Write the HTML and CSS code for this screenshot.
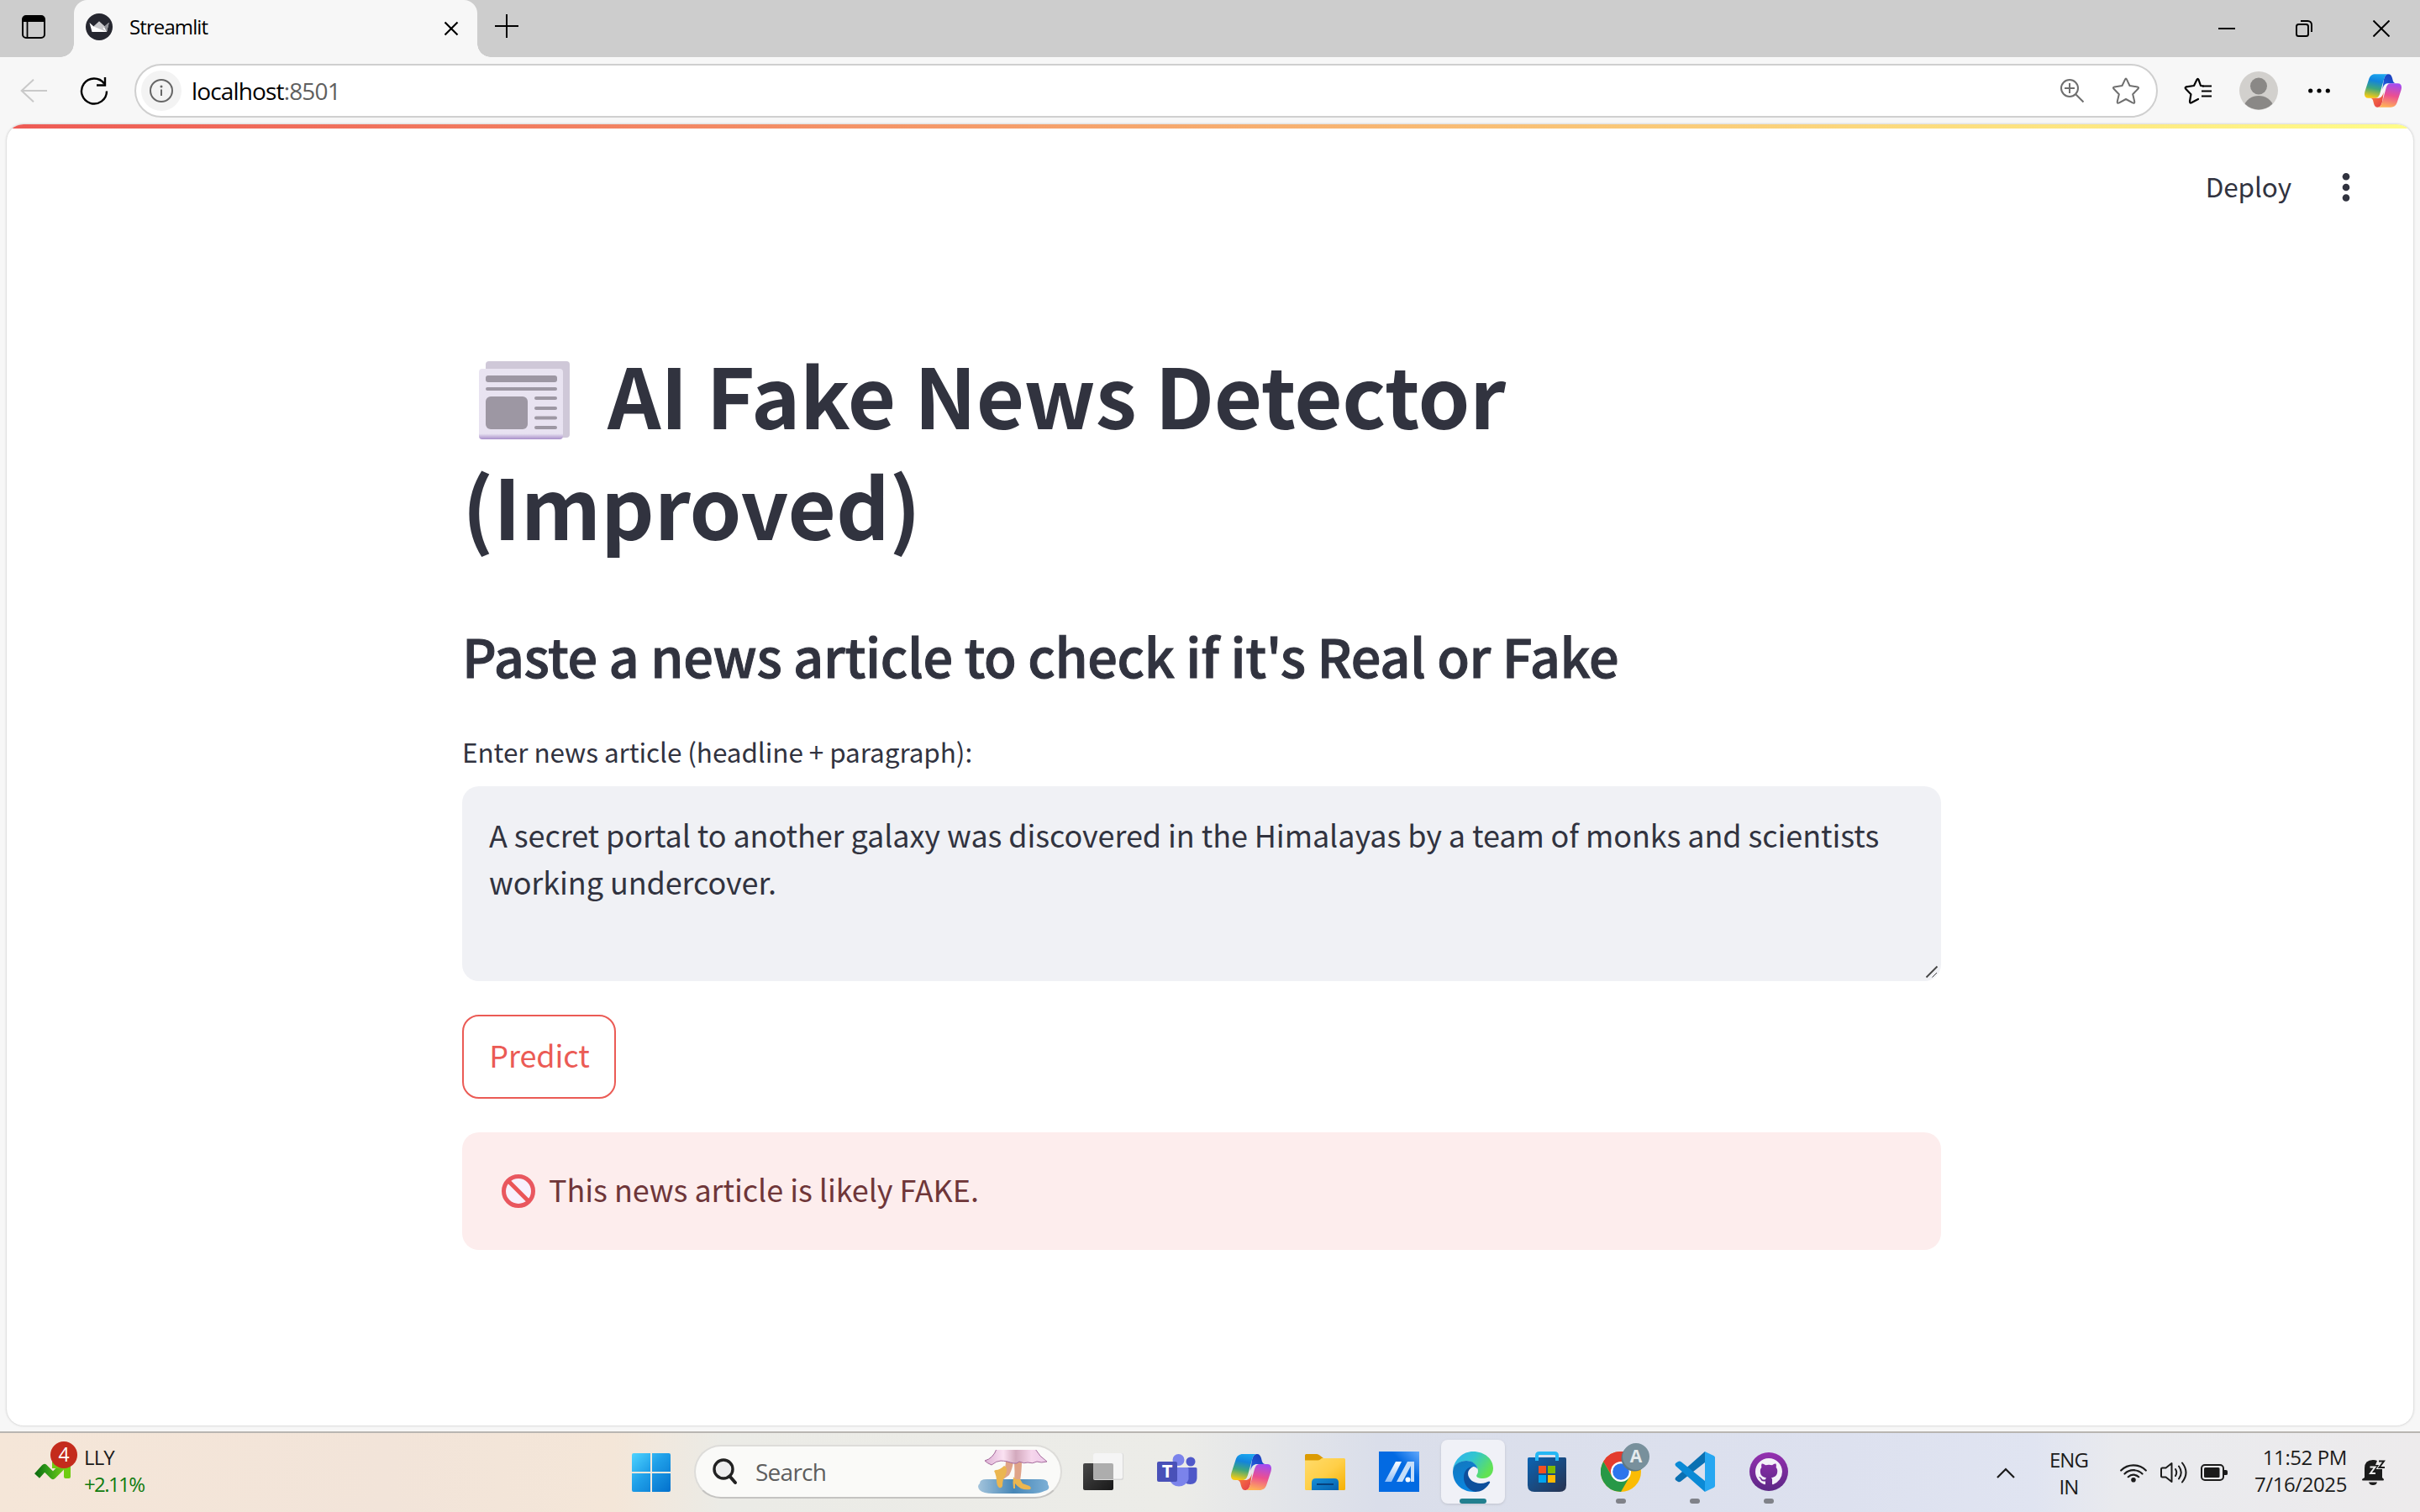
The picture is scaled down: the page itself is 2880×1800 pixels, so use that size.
FILE: index.html
```html
<!DOCTYPE html>
<html lang="en">
<head>
<meta charset="utf-8">
<title>Streamlit</title>
<link rel="stylesheet" href="styles.css">
</head>
<body>
<svg class="defs" width="0" height="0" aria-hidden="true">
  <defs>
    <linearGradient id="cpA" x1="0.6" y1="0" x2="0.4" y2="1"><stop offset="0" stop-color="#1aa5ee"/><stop offset=".3" stop-color="#1384dc"/><stop offset=".62" stop-color="#3fa77c"/><stop offset="1" stop-color="#f6cb14"/></linearGradient>
    <linearGradient id="cpB" x1="1" y1="0" x2="0.2" y2="1"><stop offset="0" stop-color="#1b39b4"/><stop offset="1" stop-color="#1f5fe0"/></linearGradient>
    <linearGradient id="cpC" x1="0.6" y1="0" x2="0.4" y2="1"><stop offset="0" stop-color="#a44cf0"/><stop offset=".5" stop-color="#ec4f90"/><stop offset="1" stop-color="#ffb257"/></linearGradient>
    <linearGradient id="cpD" x1="0" y1="0" x2="1" y2="1"><stop offset="0" stop-color="#ff8a3c"/><stop offset="1" stop-color="#e2384a"/></linearGradient>
    <symbol id="copilot" viewBox="0 0 48 43">
      <path fill="url(#cpB)" d="M31 0C34 0 35 2 36 5L37 9C38 11.500 39.500 12 42 12H31C27 12 25 14 23 20L25 7C26.500 2 28 0 31 0Z"/>
      <path fill="url(#cpA)" d="M14 0H31C28 0 26.500 2 25 7L20 25C18.500 29.500 17 31 13 31H5C0 31-.8 27 .6 22L5.500 7C7 2 10 0 14 0Z"/>
      <path fill="url(#cpD)" d="M17 43C14 43 13 41 12 38L11 34C10 31.500 8.500 31 6 31H17C21 31 23 29 25 23L23 36C21.500 41 20 43 17 43Z"/>
      <path fill="url(#cpC)" d="M34 43H17C20 43 21.500 41 23 36L28 18C29.500 13.500 31 12 35 12H43C48 12 48.800 16 47.400 21L42.500 36C41 41 38 43 34 43Z"/>
    </symbol>
  </defs>
</svg>

<header class="browser">
  <div class="tabstrip">
    <svg class="i-workspace" width="28" height="28" viewBox="0 0 28 28"><rect x="1" y="1" width="26" height="26" rx="4" fill="none" stroke="#000" stroke-width="2"/><path d="M1 8V5a4 4 0 0 1 4-4h18a4 4 0 0 1 4 4v3z"/><path d="M6.500 7v20" stroke="#000" stroke-width="1.800"/></svg>
    <div class="tab">
      <svg width="32" height="32" viewBox="0 0 32 32"><circle cx="16" cy="16" r="16" fill="#262730"/><path fill="#fff" d="M4.500 11l5 4.500L16 9.500l6.500 6L27.500 11 25 22H7.500z"/><path fill="#c9c9cc" d="M9.500 15.500L16 9.500l6.500 6-2 2.500 4.500 4z"/><path fill="#8f9096" d="M22 16l6-5.200L25 22z"/></svg>
      <span class="tab-title">Streamlit</span>
      <svg class="tab-close" width="18" height="18" viewBox="0 0 18 18"><path d="M1.500 1.500l15 15m0-15l-15 15" stroke="#000" stroke-width="2.200"/></svg>
    </div>
    <svg class="newtab" width="28" height="28" viewBox="0 0 28 28"><path d="M14 0v28M0 14h28" stroke="#000" stroke-width="2"/></svg>
    <div class="winctl">
      <svg width="20" height="20" viewBox="0 0 20 20"><path d="M0 10h20" stroke="#000" stroke-width="2"/></svg>
      <svg width="20" height="20" viewBox="0 0 20 20" fill="none" stroke="#000" stroke-width="2"><rect x="1" y="5" width="14" height="14" rx="2.500"/><path d="M6 1h8.500A4.500 4.500 0 0 1 19 5.500V14"/></svg>
      <svg width="20" height="20" viewBox="0 0 20 20"><path d="M.5.500l19 19m0-19l-19 19" stroke="#000" stroke-width="2"/></svg>
    </div>
  </div>
  <div class="toolbar">
    <svg width="32" height="28" viewBox="0 0 32 28" fill="none" stroke="#c9c9c9" stroke-width="2"><path d="M32 14H2M16 .7L1.700 14 16 27.300"/></svg>
    <svg class="i-reload" width="34" height="34" viewBox="0 0 34 34" fill="none" stroke="#000" stroke-width="2.400"><path d="M32 17.500A15 15 0 1 1 29 8.500M30 1v9.500h-10"/></svg>
    <div class="address">
      <span class="info"><svg width="28" height="28" viewBox="0 0 28 28"><circle cx="14" cy="14" r="13" fill="none" stroke="#666" stroke-width="2"/><path d="M14 12.500V20" stroke="#666" stroke-width="2"/><circle cx="14" cy="9" r="1.500" fill="#666"/></svg></span>
      <span class="url">localhost<span class="port">:8501</span></span>
      <svg class="i-zoom" width="30" height="30" viewBox="0 0 30 30" fill="none" stroke="#6f6f6f" stroke-width="2"><circle cx="12" cy="12" r="10"/><path d="M19.500 19.500L28.500 28.500M12 6v12M6 12h12"/></svg>
      <svg width="34" height="32" viewBox="0 0 34 32" fill="none" stroke="#6f6f6f" stroke-width="2" stroke-linejoin="round"><path d="M16 2.600Q17 .6 18 2.600L21.500 10 30.500 11.400Q33 12 31.400 13.800L25.200 20.200 27.200 28.800Q27.600 31.600 25 30.400L17 26 9 30.400Q6.400 31.600 6.800 28.800L8.800 20.200 2.600 13.800Q1 12 3.500 11.400L12.500 10Z"/></svg>
    </div>
    <svg class="i-fav" width="34" height="32" viewBox="0 0 34 32" fill="none" stroke="#000" stroke-width="2.200" stroke-linejoin="round" stroke-linecap="round"><path d="M23 10.500L20 10 17.500 2.800Q16.500.8 15.500 2.800L12 10 3 11.400Q.8 12 2.200 13.800L8.400 20.200 7 28.800Q7 31.400 9 30.300L17 26"/><path stroke-linecap="butt" d="M22 10.500h11M21 16.500h12M21 22.500h12"/></svg>
    <svg class="i-avatar" width="46" height="46" viewBox="0 0 46 46"><clipPath id="av"><circle cx="23" cy="23" r="22.500"/></clipPath><circle cx="23" cy="23" r="23" fill="#d2d0cd"/><g clip-path="url(#av)" fill="#8a8886"><circle cx="23" cy="17.500" r="10"/><path d="M5 42C8 33 15 29 23 29s15 4 18 13v6H5z"/></g></svg>
    <svg class="i-dots" width="26" height="8" viewBox="0 0 26 8"><circle cx="2.700" cy="4" r="2.600"/><circle cx="13" cy="4" r="2.600"/><circle cx="23.300" cy="4" r="2.600"/></svg>
    <svg class="i-cp" width="44" height="40"><use href="#copilot"/></svg>
  </div>
</header>

<main class="page">
  <div class="decoration"></div>
  <div class="app-header">
    <span class="deploy">Deploy</span>
    <svg width="10" height="36" viewBox="0 0 10 36" fill="#31333f"><circle cx="5" cy="5.300" r="4.300"/><circle cx="5" cy="18" r="4.300"/><circle cx="5" cy="30.500" r="4.300"/></svg>
  </div>
  <div class="content">
    <h1><svg class="news" width="108" height="93" viewBox="0 0 108 93">
      <defs><linearGradient id="np" x1="0" y1="0" x2="0" y2="1"><stop offset="0" stop-color="#e9e4f1"/><stop offset=".92" stop-color="#e8e2f1"/><stop offset="1" stop-color="#a88fc9"/></linearGradient></defs>
      <rect x="8" y="0" width="100" height="91" rx="4" fill="#cfc8d8"/><rect x="0" y="9" width="100" height="84" rx="4" fill="url(#np)"/>
      <g fill="#9d97a3"><rect x="8" y="17" width="85" height="8" rx="3"/><rect x="8" y="31" width="85" height="4" rx="2"/><rect x="8" y="42" width="50" height="39" rx="6"/><rect x="66" y="42" width="27" height="4" rx="2"/><rect x="66" y="54" width="27" height="4" rx="2"/><rect x="66" y="65.500" width="27" height="4" rx="2"/><rect x="66" y="77" width="27" height="4" rx="2"/></g></svg><span class="first-line">AI Fake News Detector</span><br><span>(Improved)</span></h1>
    <h3>Paste a news article to check if it's Real or Fake</h3>
    <label class="label">Enter news article (headline + paragraph):</label>
    <div class="textarea">
      <p>A secret portal to another galaxy was discovered in the Himalayas by a team of monks and scientists<br>working undercover.</p>
      <svg class="grip" width="18" height="18" viewBox="0 0 18 18" fill="none" stroke="#444"><path d="M1.500 14.500l13-13" stroke-width="1.800"/><path d="M8.500 14.500l5.500-5.500" stroke-width="1"/></svg>
    </div>
    <button class="predict">Predict</button>
    <div class="alert">
      <svg width="40" height="40" viewBox="0 0 40 40"><circle cx="20" cy="20" r="17.500" fill="#f8f1fd" stroke="#e9575f" stroke-width="5"/><path d="M8 8l24 24" stroke="#ea5558" stroke-width="5"/></svg>
      <span>This news article is likely FAKE.</span>
    </div>
  </div>
</main>

<footer class="taskbar">
  <div class="widget">
    <svg width="54" height="50" viewBox="0 0 54 50"><defs><linearGradient id="gr" x1="0" x2="1"><stop offset="0" stop-color="#107010"/><stop offset=".35" stop-color="#2f9a18"/><stop offset="1" stop-color="#78d014"/></linearGradient></defs><path d="M4 41L13 31 23 41 38 26" fill="none" stroke="url(#gr)" stroke-width="8" stroke-linejoin="round"/><path d="M22 24h22v18q0 2-2 2h-4q-2 0-2-2V32H22z" fill="#70cc12"/><circle cx="36" cy="16" r="16" fill="#c42b1c"/><text x="36" y="24" text-anchor="middle" fill="#fff" class="badge-t">4</text></svg>
    <div class="ticker"><span>LLY</span><span class="up">+2.11%</span></div>
  </div>
  <svg class="start" width="46" height="46" viewBox="0 0 46 46"><defs><linearGradient id="w" x1="0" y1="0" x2="1" y2="1"><stop offset="0" stop-color="#4fd4ff"/><stop offset=".45" stop-color="#1f9fe8"/><stop offset="1" stop-color="#0270cc"/></linearGradient></defs><path fill="url(#w)" d="M2 0H22V22H0V2Q0 0 2 0ZM24 0H44Q46 0 46 2V22H24ZM0 24H22V46H2Q0 46 0 44ZM24 24H46V44Q46 46 44 46H24Z"/></svg>
  <div class="search">
    <svg width="30" height="32" viewBox="0 0 30 32" fill="#eee" stroke="#222" stroke-width="3.400"><circle cx="13" cy="13" r="11"/><path d="M20.500 21.500L27 29" stroke-linecap="round" stroke-width="4"/></svg>
    <span>Search</span>
    <svg class="dress" width="86" height="53" viewBox="0 0 86 53">
      <defs><linearGradient id="dr" x1="0" x2="1"><stop offset="0" stop-color="#dcb0d4"/><stop offset=".3" stop-color="#fbe2f2"/><stop offset=".5" stop-color="#d3a9bd"/><stop offset=".75" stop-color="#f6d6ec"/><stop offset="1" stop-color="#ecc8e8"/></linearGradient><linearGradient id="pl" x1="0" x2="1"><stop offset="0" stop-color="#a3c4dc"/><stop offset=".5" stop-color="#4787b7"/><stop offset="1" stop-color="#7db0d6"/></linearGradient></defs>
      <path fill="url(#pl)" d="M10 35h64q10 0 9 6 4 6-4 8-6 3-14 3H18Q6 52 2 48-2 43 2 40q0-5 8-5z"/>
      <path fill="#dfa388" d="M33 13h9q-1 10-5 17l-7 5-1-6q4-7 4-16zM43 14h9q0 10-2 23l-7 1q1-12 0-24z"/>
      <path fill="#ebb650" d="M20 27q-2-2 1-3 5 0 10-5 3 1 3 5 0 5-4 11-1 4-1 8-1 3-4 2-3-3-3-8 0-5-2-10zM42 32q2 4 8 3l3 5 8 3q3 2 1 4-6 1-11-1-5-3-7-6v6h-2q-1-8 0-14z"/>
      <path fill="url(#dr)" stroke="#a56a9c" stroke-width="1" d="M22-1H68q5 9 14 15-7 2-12 0-5 3-11 1-4 2-10-1-3 3-7 2-4-1-7-2-5-1-8-1-5 0-11 5-5-2-8-5 10-3 14-14z"/>
    </svg>
  </div>
  <nav class="apps">
    <span class="app"><svg width="48" height="44" viewBox="0 0 48 44"><defs><linearGradient id="tv" x1="0" y1="0" x2="1" y2="1"><stop offset="0" stop-color="#484848"/><stop offset="1" stop-color="#181818"/></linearGradient></defs><rect y="12" width="36" height="32" rx="2" fill="url(#tv)"/><rect x="12" y="0" width="36" height="32" rx="2" fill="#d8d8d8"/><rect x="12" y="0" width="35" height="30.500" rx="2" fill="#f5f5f5"/><path d="M12 12h22q2 0 2 2v17H12z" fill="#adadad"/></svg></span>
    <span class="app"><svg width="48" height="44" viewBox="0 0 48 44"><circle cx="40" cy="10" r="5.500" fill="#5059c9"/><path d="M34 17h12q1.500 0 1.500 1.500V29c0 5-3 8-8 8-3 0-5-1-5.500-2z" fill="#4f58c8"/><circle cx="25.500" cy="8" r="7" fill="#7b83eb"/><path d="M18 17h18q1.500 0 1.500 1.500V31a12 12 0 0 1-23 0V17z" fill="#7b83eb"/><rect y="10" width="24" height="24" rx="2" fill="#4951b8"/><text x="12" y="29" text-anchor="middle" fill="#fff" class="teams-t">T</text></svg></span>
    <span class="app"><svg width="48" height="43"><use href="#copilot"/></svg></span>
    <span class="app"><svg width="48" height="43" viewBox="0 0 48 43"><defs><linearGradient id="fo" x1="0" y1="0" x2="1" y2="1"><stop offset="0" stop-color="#ffdb6a"/><stop offset=".5" stop-color="#ffcf48"/><stop offset="1" stop-color="#f5b004"/></linearGradient><linearGradient id="fb" x1="0" y1="0" x2="1" y2="1"><stop offset="0" stop-color="#1790d8"/><stop offset="1" stop-color="#0560ae"/></linearGradient></defs><path d="M0 1.500Q0 0 1.500 0H14Q16 0 17.500 1.500L22 5V10H0Z" fill="#dc9b02"/><path d="M0 7.500H15q2 0 3.500-1.300L20 5H46.500Q48 5 48 6.500V41.500Q48 43 46.500 43H1.500Q0 43 0 41.500Z" fill="url(#fo)"/><path d="M8 43V34q0-5 5-5H35q5 0 5 5V43Z" fill="url(#fb)"/><path d="M14 36H34" stroke="#07417d" stroke-width="2"/></svg></span>
    <span class="app"><svg width="48" height="48" viewBox="0 0 48 48"><defs><linearGradient id="as" x1="0" y1="1" x2="1" y2="0"><stop offset=".65" stop-color="#036ae2"/><stop offset="1" stop-color="#62a8fc"/></linearGradient><linearGradient id="as2" x1="0" y1="0" x2="0" y2="1"><stop offset="0" stop-color="#fff"/><stop offset="1" stop-color="#8fbdf6"/></linearGradient></defs><path fill="url(#as)" d="M0 0h48v48H0z"/><path fill="url(#as2)" d="M20 12h7L15 36H7z"/><path fill="#c6def9" d="M34 12h8v24h-4V17L28 36h-7z"/><circle cx="34.500" cy="33.500" r="3" fill="#fff"/></svg></span>
    <span class="app active"><svg width="48" height="48" viewBox="0 0 48 48"><defs><linearGradient id="e1" x1="0" y1="0" x2="1" y2=".5"><stop offset="0" stop-color="#2eb0f4"/><stop offset=".5" stop-color="#32c6cf"/><stop offset="1" stop-color="#62e254"/></linearGradient><linearGradient id="e2" x1="0" y1="0" x2=".4" y2="1"><stop offset="0" stop-color="#1377bd"/><stop offset="1" stop-color="#0a86e0"/></linearGradient></defs><path fill="url(#e1)" d="M0 22C2 9 12 0 24 0C38 0 48 9 48 20C48 28 42 32 36 32C30 32 26.500 30 29 27C32 22 28 12 17 11C8 11 2 16 0 22Z"/><path fill="url(#e2)" d="M0 24C0 16 8 11 16 11C24 11 29 16 29.500 21C27 17 22 17 19 21C15 27 18 40 32 40L27 47.900C11 49 0 38 0 24Z"/><path fill="#0e4f9c" d="M13 31C13 23 18 18 24 18C20 20 18 23 18 26C18 33 25 38 33 38C38 38 41 36 43 35.500C44.500 35.500 44.500 37 43.500 38C39 45 33 48 27 48C18 46 13 39 13 31Z"/></svg><i class="ind"></i></span>
    <span class="app"><svg width="46" height="48" viewBox="0 0 46 48"><defs><linearGradient id="st" x1="0" y1="0" x2="1" y2="1"><stop offset="0" stop-color="#0b64b4"/><stop offset="1" stop-color="#28324f"/></linearGradient></defs><path d="M0 8.500Q0 7 1.500 7h43Q46 7 46 8.500V40q0 8-8 8H8q-8 0-8-8z" fill="url(#st)"/><path d="M11 11V5q0-3 3-3h18q3 0 3 3v6" fill="none" stroke="#25b7f4" stroke-width="4"/><path fill="#f25022" d="M13 17h9v9h-9z"/><path fill="#7fba00" d="M24 17h9v9h-9z"/><path fill="#00a4ef" d="M13 28h9v9h-9z"/><path fill="#ffb900" d="M24 28h9v9h-9z"/></svg></span>
    <span class="app"><svg class="chrome" width="58" height="58" viewBox="0 0 58 58"><g transform="translate(0 10)"><circle cx="24" cy="24" r="24" fill="#fbbc05"/><path fill="#e33b2e" d="M24 24L3.200 12A24 24 0 0 1 44.800 12H24z"/><path fill="#e33b2e" d="M3.200 12A24 24 0 0 1 44.800 12L24 13 14 30z"/><path fill="#279847" d="M3.200 12A24 24 0 0 0 24 48L34.400 30 13.600 30z"/><circle cx="24" cy="24" r="12" fill="#fff"/><circle cx="24" cy="24" r="9.800" fill="#2c75ec"/></g><circle cx="40" cy="18" r="15.500" fill="#5f7883"/><circle cx="42" cy="16" r="16" fill="#78909c"/><text x="42" y="23" text-anchor="middle" fill="#e4eaed" class="chrome-t">A</text></svg><i class="ind"></i></span>
    <span class="app"><svg width="48" height="48" viewBox="0 0 48 48"><path fill="#0a70b2" d="M36 0L1 31Q0 33 1 34L4 36Q6 37 8 35L36 13Z"/><path fill="#0a8ad6" d="M4 12Q6 11 8 12.500L36 35V48L1 17Q0 15 1 14Z"/><path fill="#27a7f1" d="M36 0L46.500 5Q48 6 48 7V41Q48 42 46.500 43L36 48Z"/></svg><i class="ind"></i></span>
    <span class="app"><svg width="46" height="46" viewBox="0 0 46 46"><defs><linearGradient id="gh" x1="0" y1="0" x2="0" y2="1"><stop offset="0" stop-color="#9530b0"/><stop offset="1" stop-color="#5c2785"/></linearGradient></defs><circle cx="23" cy="23" r="23" fill="url(#gh)"/><path fill="#f4f2f8" transform="translate(7 7) scale(2)" d="M8 0C3.580 0 0 3.580 0 8c0 3.540 2.290 6.530 5.470 7.590.4.070.55-.17.55-.38 0-.19-.01-.82-.01-1.490-2.010.37-2.530-.49-2.690-.94-.09-.23-.48-.94-.82-1.130-.28-.15-.68-.52-.01-.53.63-.01 1.080.58 1.230.82.72 1.210 1.870.87 2.330.66.07-.52.28-.87.51-1.070-1.780-.2-3.640-.89-3.640-3.950 0-.87.31-1.590.82-2.150-.08-.2-.36-1.020.08-2.120 0 0 .67-.21 2.200.82.64-.18 1.320-.27 2-.27s1.360.09 2 .27c1.530-1.040 2.200-.82 2.200-.82.44 1.100.16 1.920.08 2.120.51.56.82 1.270.82 2.150 0 3.070-1.870 3.750-3.650 3.950.29.25.54.73.54 1.480 0 1.070-.01 1.930-.01 2.200 0 .21.15.46.55.38A8.010 8.010 0 0 0 16 8c0-4.420-3.580-8-8-8z"/></svg><i class="ind"></i></span>
  </nav>
  <div class="tray">
    <svg width="22" height="13" viewBox="0 0 22 13" fill="none" stroke="#1b1b1b" stroke-width="2.200"><path d="M1 12L11 2l10 10"/></svg>
    <div class="lang"><span>ENG</span><span>IN</span></div>
    <svg class="i-wifi" width="32" height="24" viewBox="0 0 32 24" fill="none" stroke="#1b1b1b" stroke-width="2.200" stroke-linecap="round"><path d="M1.200 9.500a21 21 0 0 1 29.600 0M5.500 13.500a15 15 0 0 1 21 0M9.800 17.200a9 9 0 0 1 12.400 0"/><circle cx="16" cy="20.800" r="2.800" fill="#1b1b1b" stroke="none"/></svg>
    <svg class="i-vol" width="33" height="28" viewBox="0 0 33 28" fill="none" stroke="#1b1b1b" stroke-width="2" stroke-linecap="round" stroke-linejoin="round"><path d="M1 10q0-1.500 1.500-1.500H6.500L13.500 3V25L6.500 19.500H2.500Q1 19.500 1 18zM18 10q2.500 4 0 8M22 6.500q5.500 7.500 0 15M26 2.500q9 11.500 0 23"/></svg>
    <svg class="i-bat" width="32" height="20" viewBox="0 0 32 20"><rect x="1" y="1" width="26" height="18" rx="4" fill="none" stroke="#1b1b1b" stroke-width="2"/><rect x="4" y="4" width="18.500" height="12" rx="1.500" fill="#1b1b1b"/><path d="M28 7h2q2 0 2 1.500v3q0 1.500-2 1.500h-2z" fill="#1b1b1b"/></svg>
    <div class="clock"><span>11:52 PM</span><span>7/16/2025</span></div>
    <svg class="i-bell" width="28" height="30" viewBox="0 0 28 30"><path fill="#1b1b1b" d="M3 21V10Q3 0 13 0q3 0 5 1l-2 5h8v15l2 2q0 1.500-1 1.500H1Q0 24.500 0 23zM8 26.500h10q-1 3.500-5 3.500t-5-3.500z"/><path d="M9.500 8.500h6L10 16h6" fill="none" stroke="#eee" stroke-width="2"/><path d="M20 1.500h6L20.500 9H27" fill="none" stroke="#eee" stroke-width="4"/><path d="M20 1.500h6L20.500 9H27" fill="none" stroke="#1b1b1b" stroke-width="2"/></svg>
  </div>
</footer>
</body>
</html>
```
FILE: styles.css
```css
* { box-sizing: border-box; }
body {
  margin: 0; width: 2880px; height: 1800px; overflow: hidden;
  display: flex; flex-direction: column; background: #f7f7f7;
  font-family: "Open Sans", "Noto Sans", sans-serif; color: #1b1b1b;
}
svg { display: block; flex: none; }
.defs { position: absolute; }

/* browser chrome */
.tabstrip { height: 68px; background: #cdcdcd; display: flex; }
.i-workspace { margin: 18px 34px 0 26px; }
.tab {
  width: 480px; height: 68px; background: #f7f7f7; border-radius: 16px 16px 0 0;
  display: flex; align-items: center; padding: 0 22px 4px 14px; position: relative;
}
.tab::before, .tab::after {
  content: ""; position: absolute; bottom: 0; width: 16px; height: 16px;
}
.tab::before { left: -16px; background: radial-gradient(circle at 0 0, #cdcdcd 15.5px, #f7f7f7 16px); }
.tab::after { right: -16px; background: radial-gradient(circle at 100% 0, #cdcdcd 15.5px, #f7f7f7 16px); }
.tab-title { margin-left: 20px; font-size: 24px; line-height: 32px; letter-spacing: -0.9px; color: #000; }
.tab-close { margin-left: auto; margin-top: 3px; }
.newtab { margin: 17px 0 0 21px; }
.winctl { margin: 24px 36px 0 auto; display: flex; gap: 72px; }

.toolbar { height: 80px; display: flex; align-items: center; padding-left: 24px; }
.i-reload { margin: 0 31px 0 39px; }
.address {
  width: 2408px; height: 64px; border: 2px solid #cfcfcf; border-radius: 32px; background: #fff;
  display: flex; align-items: center; padding: 0 19px 0 6px;
}
.info { width: 48px; height: 48px; border-radius: 50%; background: #f3f3f3; display: grid; place-items: center; }
.url { margin-left: 12px; padding-bottom: 1px; font-size: 28px; line-height: 40px; letter-spacing: -0.85px; color: #000; }
.port { color: #5f5f5f; }
.i-zoom { margin: 0 32px 0 auto; }
.i-fav { margin-left: 31px; }
.i-avatar { margin-left: 32px; }
.i-dots { margin-left: 36px; }
.i-cp { margin-left: 41px; }

/* streamlit page */
.page {
  width: 2864px; height: 1549px; margin: 0 8px; flex: none; background: #fff;
  border-radius: 20px; overflow: hidden; box-shadow: 0 0 3px #bbb;
  font-family: "Noto Sans CJK SC", sans-serif; color: #31333f;
}
.decoration { height: 5px; background: linear-gradient(90deg, #ee5a55, #fffd89); }
.app-header { height: 140px; display: flex; justify-content: flex-end; align-items: center; gap: 60px; padding-right: 75px; }
.deploy { font-size: 31.5px; line-height: 48px; padding-bottom: 5px; letter-spacing: -0.1px; }
.content { width: 1760px; margin-left: 542px; padding-top: 109px; display: flex; flex-direction: column; align-items: flex-start; }
h1 { margin: 0; font-size: 99px; line-height: 132px; height: 264px; font-weight: 700; white-space: nowrap; letter-spacing: -0.15px; }
.first-line { letter-spacing: -0.35px; }
.news { display: inline-block; margin: 0 45px 0 20px; vertical-align: -12px; }
h3 { margin: 72px 0 0; font-size: 63px; line-height: 84px; font-weight: 500; white-space: nowrap; letter-spacing: -0.36px; -webkit-text-stroke: 1px #31333f; }
.label { margin-top: 48px; font-size: 31.5px; line-height: 48px; white-space: nowrap; letter-spacing: -0.08px; }
.textarea { margin-top: 18px; width: 1760px; height: 232px; border-radius: 20px; background: #f0f1f5; padding: 29px 32px; position: relative; }
.textarea p { margin: 0; font-size: 36px; line-height: 56px; white-space: nowrap; letter-spacing: -0.09px; }
.grip { position: absolute; right: 1px; bottom: 1px; }
.predict {
  margin-top: 40px; width: 183px; height: 100px; border: 2px solid #eb5b55; border-radius: 20px; background: #fff;
  color: #eb5b55; font: 36px/56px "Noto Sans CJK SC", sans-serif; padding: 0 0 6px 1px; letter-spacing: -0.1px;
}
.alert {
  margin-top: 40px; width: 1760px; height: 140px; border-radius: 20px; background: #fdeded; color: #6f3639;
  font-size: 36px; line-height: 56px; display: flex; align-items: center; gap: 16px; padding-left: 47px; letter-spacing: -0.07px;
}
.alert span { padding-bottom: 6px; }

/* taskbar */
.taskbar {
  margin-top: 7px; height: 96px; flex: none; border-top: 2px solid #b9b6b2; display: flex;
  background: linear-gradient(90deg, #f5e6d8 0, #f2e4d9 460px, #f4e6d8 730px, #ebebe6 860px, #ecece8 1400px, #dadeea 1640px, #dde1ef 2200px, #e0e4f1 2420px, #e9eaee 2520px, #edebec 2880px);
  font-size: 24px; line-height: 32px; letter-spacing: -0.9px;
}
.widget { width: 712px; margin-right: 40px; padding: 10px 0 0 40px; display: flex; }
.ticker { margin-left: 6px; padding-top: 3px; display: flex; flex-direction: column; }
.up { color: #107c10; letter-spacing: -1.6px; }
.badge-t { font-size: 23px; letter-spacing: 0; }
.start { margin: 24px 28px 0 0; }
.search {
  margin-top: 14px; width: 438px; height: 64px; border-radius: 32px; background: #fafaf8;
  border: 2px solid #dddcd9; border-bottom-color: #c4c3c1;
  display: flex; align-items: center; padding: 0 12px 0 20px; font-size: 28px; color: #5e5e5e; letter-spacing: -0.75px;
}
.search span { margin-left: 21px; }
.dress { margin-left: auto; }
.apps { display: flex; margin: 8px 0 0 11px; gap: 12px; }
.app { width: 76px; height: 76px; display: grid; place-items: center; position: relative; }
.active { background: #f0f1f7; border-radius: 8px; box-shadow: 0 1px 3px #bfc2cc; }
.ind { position: absolute; left: 32px; bottom: 0; width: 12px; height: 6px; border-radius: 3px; background: #808289; }
.active .ind { left: 22px; width: 32px; background: #22808f; }
.chrome { margin: -10px -10px 0 0; }
.teams-t { font-size: 22px; font-weight: 700; letter-spacing: 0; }
.chrome-t { font-size: 21px; font-weight: 700; letter-spacing: 0; }
.tray { display: flex; align-items: center; margin-left: auto; padding-right: 41px; }
.lang { display: flex; flex-direction: column; align-items: center; width: 66px; margin: 1px 0 0 31px; }
.i-wifi { margin-left: 28px; }
.i-vol { margin-left: 16px; }
.i-bat { margin-left: 15px; }
.clock { display: flex; flex-direction: column; align-items: flex-end; width: 142px; letter-spacing: -0.4px; margin-bottom: 4px; }
.i-bell { margin-left: 18px; }
```
